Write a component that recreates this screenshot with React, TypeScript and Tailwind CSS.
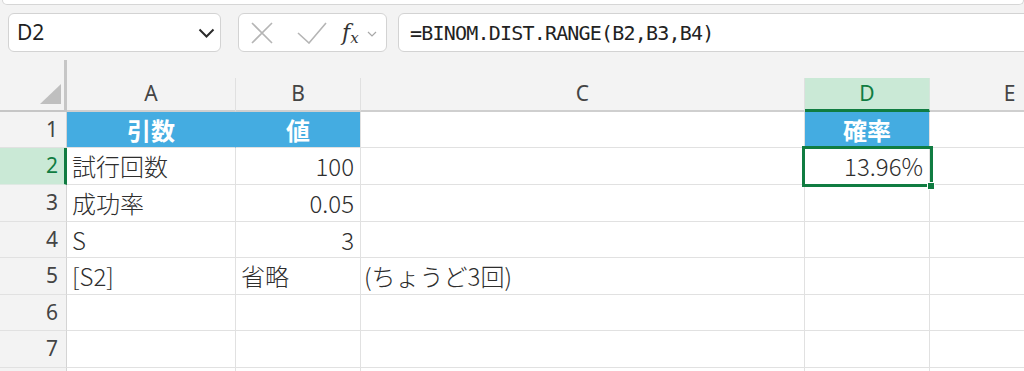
const cellFont = { fontFamily: "'Noto Sans CJK JP', 'Noto Sans', sans-serif" };

type Cell = { text?: string; cls: string };
type Row = { n: string; h: string; sel?: boolean; cells: Cell[] };

const base = "shrink-0 flex items-center whitespace-nowrap overflow-hidden bg-white border-b border-r border-[#e1e1e1] text-[24px] leading-none font-light text-[#2e2e2e]";
const blue = "shrink-0 flex items-center justify-center whitespace-nowrap overflow-hidden border-b border-r border-b-[#e1e1e1] text-[24px] leading-none text-white font-bold bg-[#44ace1]";

const empty = (w: string): Cell => ({ cls: `${base} ${w}` });
const blankRow = (): Cell[] => [empty("w-[169px]"), empty("w-[125px]"), empty("w-[444px]"), empty("w-[125px]"), empty("w-[160px]")];

const rows: Row[] = [
  {
    n: "1",
    h: "h-[36px]",
    cells: [
      { text: "引数", cls: `${blue} w-[169px] border-r-[#44ace1]` },
      { text: "値", cls: `${blue} w-[125px] border-r-[#e1e1e1]` },
      empty("w-[444px]"),
      { text: "確率", cls: `${blue} w-[125px] border-r-[#e1e1e1]` },
      empty("w-[160px]"),
    ],
  },
  {
    n: "2",
    h: "h-[37px]",
    sel: true,
    cells: [
      { text: "試行回数", cls: `${base} w-[169px] pl-[5px]` },
      { text: "100", cls: `${base} w-[125px] justify-end pr-[6px]` },
      empty("w-[444px]"),
      { text: "13.96%", cls: `${base} w-[125px] justify-end pr-[6px]` },
      empty("w-[160px]"),
    ],
  },
  {
    n: "3",
    h: "h-[37px]",
    cells: [
      { text: "成功率", cls: `${base} w-[169px] pl-[5px]` },
      { text: "0.05", cls: `${base} w-[125px] justify-end pr-[6px]` },
      empty("w-[444px]"),
      empty("w-[125px]"),
      empty("w-[160px]"),
    ],
  },
  {
    n: "4",
    h: "h-[36px]",
    cells: [
      { text: "S", cls: `${base} w-[169px] pl-[5px]` },
      { text: "3", cls: `${base} w-[125px] justify-end pr-[6px]` },
      empty("w-[444px]"),
      empty("w-[125px]"),
      empty("w-[160px]"),
    ],
  },
  {
    n: "5",
    h: "h-[37px]",
    cells: [
      { text: "[S2]", cls: `${base} w-[169px] pl-[5px]` },
      { text: "省略", cls: `${base} w-[125px] pl-[5px]` },
      { text: "(ちょうど3回)", cls: `${base} w-[444px] pl-[3px]` },
      empty("w-[125px]"),
      empty("w-[160px]"),
    ],
  },
  { n: "6", h: "h-[36px]", cells: blankRow() },
  { n: "7", h: "h-[37px]", cells: blankRow() },
  // only the top edge of row 8 shows
  { n: "", h: "h-[36px]", cells: blankRow() },
];

const headers = [
  { k: "A", cls: "w-[169px]" },
  { k: "B", cls: "w-[125px]" },
  { k: "C", cls: "w-[444px]" },
  { k: "D", cls: "w-[125px]", sel: true },
  { k: "E", cls: "w-[160px]" },
];

export default function App() {
  return (
    <div className="relative w-[1024px] h-[371px] overflow-hidden bg-[#f3f3f3]">
      {/* ribbon edge */}
      <div className="ml-[2px] h-[5px] bg-white border-b border-x border-[#d6d6d6] rounded-b-[8px]" />

      {/* formula bar row */}
      <div className="mt-[8px] flex items-center h-[39px]">
        <div className="ml-[8px] w-[213px] h-[39px] shrink-0 flex items-center justify-between bg-white border border-[#d3d3d3] rounded-[6px] pl-[8px] pr-[4px]">
          <span className="text-[21px] text-[#1f1f1f] leading-none" style={{ fontFamily: "'Noto Sans', sans-serif" }}>
            D2
          </span>
          <svg width="17" height="10" viewBox="0 0 17 10" className="mr-[1px]">
            <polyline points="1.5,1.5 8.5,8.5 15.5,1.5" fill="none" stroke="#2b2b2b" strokeWidth="2" />
          </svg>
        </div>

        <div className="ml-[17px] w-[149px] h-[39px] shrink-0 flex items-center bg-white border border-[#d3d3d3] rounded-[6px] pl-[12px]">
          <svg width="22" height="22" viewBox="0 0 22 22">
            <path d="M1 1 L21 21 M21 1 L1 21" stroke="#b5b5b5" strokeWidth="1.6" />
          </svg>
          <svg width="30" height="22" viewBox="0 0 30 22" className="ml-[24px]">
            <polyline points="1,11 12,21 29,1" fill="none" stroke="#b5b5b5" strokeWidth="1.6" />
          </svg>
          <span className="ml-[15px] flex items-end leading-none text-[#333]" style={{ fontFamily: "'DejaVu Serif', serif" }}>
            <span className="italic text-[22px]">f</span>
            <span className="italic text-[15px] translate-y-[2px]">x</span>
          </span>
          <svg width="10" height="6" viewBox="0 0 10 6" className="ml-[8px] mt-[2px]">
            <polyline points="1,1 5,5 9,1" fill="none" stroke="#a8a8a8" strokeWidth="1.2" />
          </svg>
        </div>

        <div className="ml-[11px] mr-[-12px] flex-1 h-[39px] flex items-center bg-white border border-[#d3d3d3] rounded-[6px] pl-[11px]">
          <span
            className="text-[20px] tracking-[-0.8px] text-[#222] leading-none"
            style={{ fontFamily: "'DejaVu Sans Mono', monospace" }}
          >
            =BINOM.DIST.RANGE(B2,B3,B4)
          </span>
        </div>
      </div>

      {/* splitter */}
      <div className="h-[26px] pt-[8px]">
        <div className="ml-[64px] w-[3px] h-[18px] bg-[#c6c6c6]" />
      </div>

      {/* column headers */}
      <div className="flex h-[34px]" style={{ fontFamily: "'Noto Sans', sans-serif" }}>
        <div className="relative w-[67px] shrink-0 border-r-[3px] border-b-2 border-[#c6c6c6]">
          <svg width="24" height="24" viewBox="0 0 24 24" className="absolute left-[39px] top-[5px]">
            <polygon points="22,1 22,21 1,21" fill="#bfbfbf" />
          </svg>
        </div>
        {headers.map((h) =>
          h.sel ? (
            <div
              key={h.k}
              className={`${h.cls} shrink-0 flex items-center justify-center bg-[#cae9d6] border-r border-r-[#d6e6dc] border-b-[3px] border-b-[#107c41] text-[21px] text-[#107c41]`}
            >
              {h.k}
            </div>
          ) : (
            <div
              key={h.k}
              className={`${h.cls} shrink-0 flex items-center justify-center border-r border-r-[#e0e0e0] border-b-2 border-b-[#cfcfcf] text-[21px] text-[#444]`}
            >
              {h.k}
            </div>
          )
        )}
      </div>

      {/* body */}
      <div style={cellFont}>
        {rows.map((r, ri) => (
          <div key={ri} className={`flex ${r.h}`}>
            {r.sel ? (
              <div
                className="w-[67px] shrink-0 flex items-center justify-end pr-[6px] bg-[#cae9d6] border-b border-b-[#dfe9e3] border-r-[3px] border-r-[#107c41] text-[21px] text-[#107c41]"
                style={{ fontFamily: "'Noto Sans', sans-serif" }}
              >
                {r.n}
              </div>
            ) : (
              <div
                className="w-[67px] shrink-0 flex items-center justify-end pr-[8px] bg-[#f3f3f3] border-b border-b-[#e1e1e1] border-r border-r-[#d4d4d4] text-[21px] text-[#444]"
                style={{ fontFamily: "'Noto Sans', sans-serif" }}
              >
                {r.n}
              </div>
            )}
            {r.cells.map((c, i) => (
              <div key={i} className={c.cls}>
                {c.text}
              </div>
            ))}
          </div>
        ))}
      </div>

      {/* selection D2 */}
      <div className="absolute left-[802px] top-[146px] w-[131px] h-[41px] border-[3px] border-[#107c41]" />
      <div className="absolute left-[927px] top-[182px] w-[8px] h-[8px] bg-[#107c41] border border-white" />
    </div>
  );
}
